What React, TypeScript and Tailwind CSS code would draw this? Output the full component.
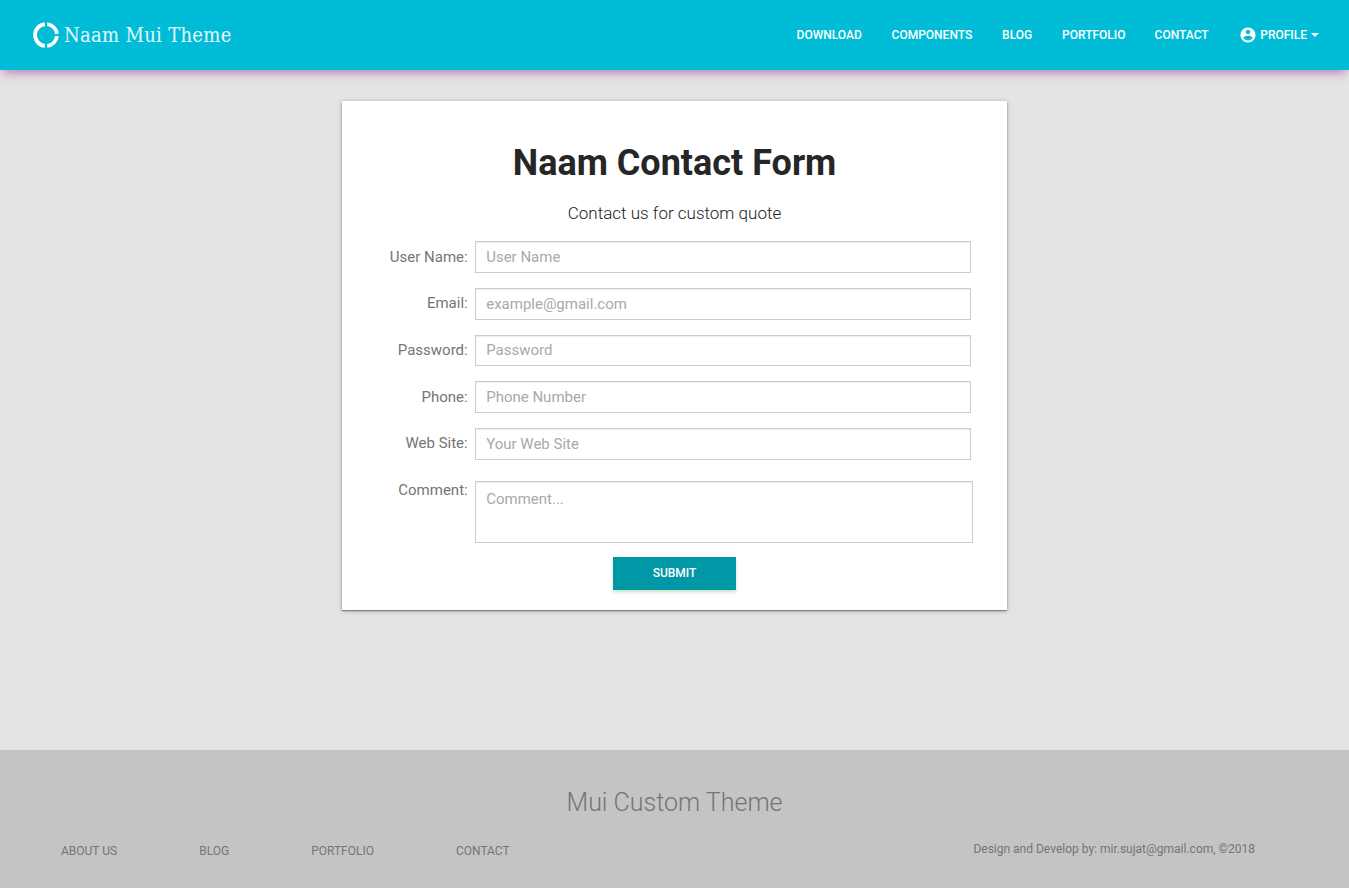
import React from "react";

const nav = [
  { label: "DOWNLOAD", w: "w-[65px]" },
  { label: "COMPONENTS", w: "w-[80.5px]" },
  { label: "BLOG", w: "w-[30px]" },
  { label: "PORTFOLIO", w: "w-[62.5px]" },
  { label: "CONTACT", w: "w-[54.7px]" },
];

const fields = [
  { label: "User Name:", placeholder: "User Name", type: "text", h: "h-[32px]", lift: "" },
  { label: "Email:", placeholder: "example@gmail.com", type: "email", h: "h-[32px]", lift: "pb-[2px]" },
  { label: "Password:", placeholder: "Password", type: "password", h: "h-[31px]", lift: "" },
  { label: "Phone:", placeholder: "Phone Number", type: "text", h: "h-[32px]", lift: "" },
  { label: "Web Site:", placeholder: "Your Web Site", type: "text", h: "h-[32px]", lift: "pb-[2px]" },
];

export default function App() {
  return (
    <div className="flex h-[888px] flex-col overflow-hidden bg-[#e4e4e4] font-['Roboto',sans-serif]">
      <header className="flex h-[70px] shrink-0 items-center justify-between bg-[#00bcd7] pr-[30px] pl-[31px] text-white shadow-[0_5px_10px_-3px_rgba(128,0,128,0.5)]">
        <div className="flex items-center gap-[3px]">
          <svg width="30" height="30" viewBox="0 0 30 30" fill="none" stroke="white" strokeWidth="3.8">
            <path d="M16.1 4.06A11 11 0 0 1 25.94 13.9M25.94 16.1A11 11 0 0 1 16.1 25.94M13.9 25.94A11 11 0 0 1 13.9 4.06" />
          </svg>
          <span className="w-[170px] font-['Roboto_Slab','DejaVu_Serif_Condensed','DejaVu_Serif',serif] text-[20px] leading-[28px] font-light tracking-[0.3px] whitespace-nowrap text-white/90">Naam Mui Theme</span>
        </div>
        <nav className="flex items-center gap-[30px] text-[12px] font-medium">
          {nav.map((n) => (
            <span key={n.label} className={`${n.w} whitespace-nowrap`}>{n.label}</span>
          ))}
          <span className="flex items-center">
            <svg className="mr-[3px]" width="18" height="18" viewBox="0 0 24 24" fill="white">
              <path d="M12 2C6.48 2 2 6.48 2 12s4.48 10 10 10 10-4.48 10-10S17.52 2 12 2zm0 3c1.66 0 3 1.34 3 3s-1.34 3-3 3-3-1.34-3-3 1.34-3 3-3zm0 14.2c-2.5 0-4.71-1.28-6-3.22.03-1.99 4-3.08 6-3.08 1.99 0 5.97 1.09 6 3.08-1.29 1.94-3.5 3.22-6 3.22z" />
            </svg>
            PROFILE
            <span className="ml-1 border-x-4 border-t-4 border-x-transparent border-t-white" />
          </span>
        </nav>
      </header>

      <main className="flex h-[680px] shrink-0 justify-center pt-[31px]">
        <form className="flex h-[509px] w-[665px] flex-col items-center bg-white pt-[40px] shadow-[0_1px_4px_rgba(0,0,0,0.3),0_1px_1px_rgba(0,0,0,0.3)]">
          <h1 className="text-[36px] leading-[44px] font-bold text-[#262626]">Naam Contact Form</h1>
          <p className="mt-[17px] text-[17px] leading-[22px] font-light text-[#212121]">Contact us for custom quote</p>
          <div className="mt-[17px] flex w-full flex-col gap-[14.8px] pl-[25px] text-[15px] text-[#757575]">
            {fields.map((f) => (
              <label key={f.label} className="flex h-[32px] items-start">
                <span className={`flex h-[32px] w-[100.7px] items-center justify-end ${f.lift}`}>{f.label}</span>
                <input type={f.type} placeholder={f.placeholder} className={`${f.h} ml-[7.3px] w-[496px] border border-[#ccc] bg-white px-[10.2px] shadow-[inset_0_1px_1px_rgba(0,0,0,0.08)] placeholder:text-[#a9a9a9]`} />
              </label>
            ))}
            <label className="mt-[6px] flex">
              <span className="w-[100.7px] text-right leading-[18px]">Comment:</span>
              <textarea placeholder="Comment..." className="ml-[7.3px] h-[62px] w-[498px] resize-none border border-[#ccc] bg-white px-[10.2px] py-[6px] shadow-[inset_0_1px_1px_rgba(0,0,0,0.08)] placeholder:text-[#a9a9a9]" />
            </label>
          </div>
          <button type="button" className="mt-[14px] h-[33px] w-[123px] bg-[#0097a7] text-[12px] font-medium text-white shadow-[0_2px_3px_rgba(76,175,80,0.35)]">SUBMIT</button>
        </form>
      </main>

      <footer className="h-[138px] shrink-0 bg-[#c4c4c4] pt-[36px] text-[12px] text-[#757575]">
        <h2 className="text-center text-[25px] leading-[34px] font-light">Mui Custom Theme</h2>
        <div className="mt-[21px] flex justify-between pr-[94px] pl-[61px] leading-[20px]">
          <nav className="flex gap-[82px]">
            <span>ABOUT US</span>
            <span>BLOG</span>
            <span>PORTFOLIO</span>
            <span>CONTACT</span>
          </nav>
          <p className="-mt-[2px]">Design and Develop by: mir.sujat@gmail.com, ©2018</p>
        </div>
      </footer>
    </div>
  );
}
